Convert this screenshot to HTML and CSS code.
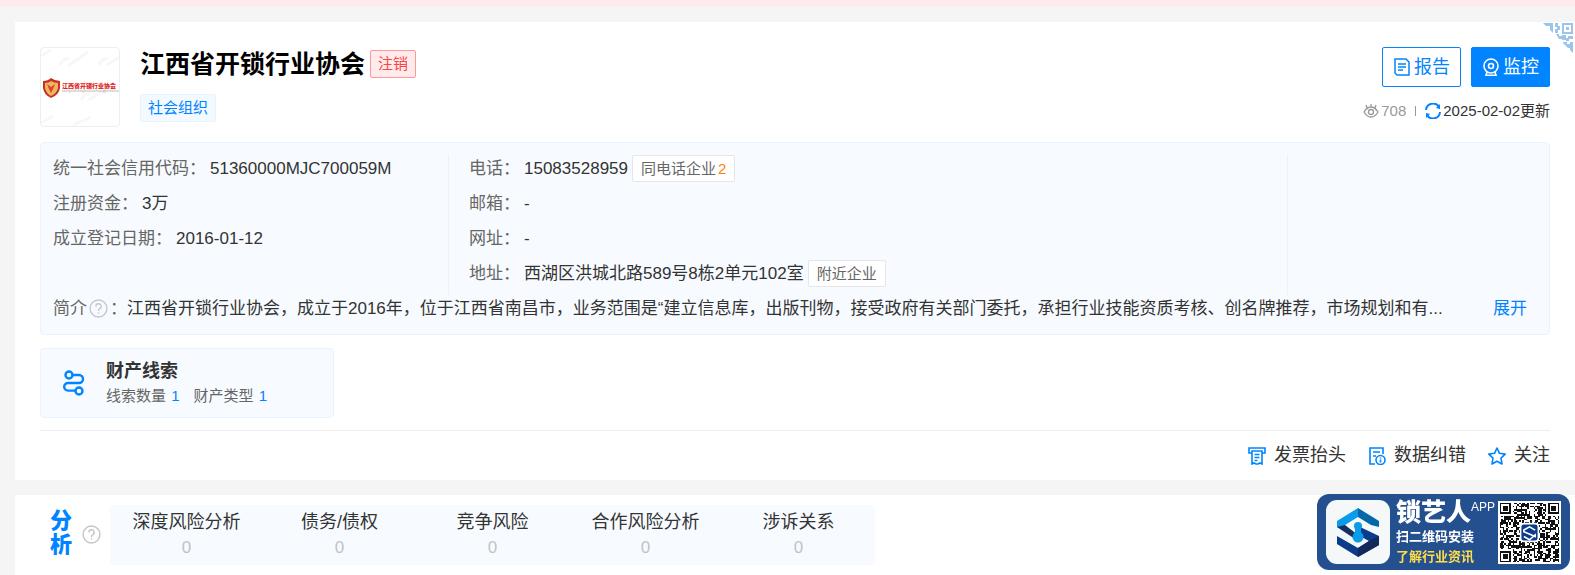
FILE: index.html
```html
<!DOCTYPE html>
<html lang="zh-CN">
<head>
    <meta charset="UTF-8">
    <meta name="viewport" content="width=device-width, initial-scale=1.0">
    <title>江西省开锁行业协会</title>
    <link rel="stylesheet" href="styles.css">
</head>
<body>
    <div class="notice"></div>

    <main class="page">
        <section class="card company">
            <svg class="corner" viewBox="0 0 30 30" aria-hidden="true">
                <g fill="#9cc5ec">
                    <path d="M0 0h10v10L7 7V3H3z"/>
                    <path d="M12 0h3v3h2v4h-2v3h-3V6h2V4h-2zM19 0h11v11H19zM13 11h3v2h3v-1h4v3h2v-2h5v3h-4v2h-3v-1h-3l-2-1h-2z"/>
                    <path d="M20 19h4v2h3v-2h3v11l-3-3v-2h-2l-5-5z"/>
                </g>
                <path d="M21 2h7v7h-7z" fill="#fff"/>
                <path d="M23 4h3v3h-3z" fill="#9cc5ec"/>
            </svg>

            <header class="company-head">
                <div class="logo">
                    <svg viewBox="0 0 78 78" aria-hidden="true">
                        <g fill="none" stroke="#f7f7f7" stroke-width="3">
                            <path d="M19 17q3-7 9-6M27 18l20-14M58 17q3-7 9-6M66 17l12-8M40 52q3-7 9-6M48 52l20-13M0 75l12-7M32 77l18-8M0 8l10-6"/>
                        </g>
                        <path d="M2 33q5 0 8-3 4 3 9 3v7q-1 7-9 10-7-3-8-10z" fill="#c9302c"/>
                        <path d="M4 35q4 0 6-2 3 2 7 2v5q-1 5-7 8-5-3-6-8z" fill="#efb65c"/>
                        <path d="M6 36l4 3 4-3-2 5-2 4-2-4z" fill="#d6452f"/>
                        <text x="21" y="40" class="logo-name">江西省开锁行业协会</text>
                        <text x="21" y="44" class="logo-latin">jiangxishengkaisuohangyexiehui</text>
                    </svg>
                </div>
                <div class="names">
                    <div class="title-row">
                        <h1>江西省开锁行业协会</h1>
                        <span class="tag tag-red">注销</span>
                    </div>
                    <span class="tag tag-blue">社会组织</span>
                </div>
                <div class="head-side">
                    <div class="buttons">
                        <button class="btn" type="button">
                            <svg viewBox="0 0 18 18" fill="none" stroke="currentColor" stroke-width="1.5" aria-hidden="true">
                                <path d="M2 1h11l3 3v13H4l-2-2zM5 6h8M5 9h8M5 12h5"/>
                            </svg>报告
                        </button>
                        <button class="btn btn-main" type="button">
                            <svg viewBox="0 0 18 18" fill="none" stroke="currentColor" stroke-width="1.6" aria-hidden="true">
                                <circle cx="9" cy="8" r="7"/><circle cx="9" cy="8" r="2.5"/>
                                <path d="M5 14l-1 3.2h10L13 14"/>
                            </svg>监控
                        </button>
                    </div>
                    <div class="meta">
                        <svg viewBox="0 0 16 16" fill="none" stroke="#999" stroke-width="1.3" aria-hidden="true">
                            <path d="M1 9q3-5 7-5t7 5q-3 5-7 5T1 9zM8 4V1M4 5L3 2M12 5l1-3"/>
                            <circle cx="8" cy="9" r="2.5"/>
                        </svg>
                        <span class="views">708</span>
                        <span class="bar"></span>
                        <svg viewBox="0 0 16 16" fill="none" stroke="#0084ff" stroke-width="2" aria-hidden="true">
                            <path d="M1 7a7 7 0 0 1 13-3M15 9a7 7 0 0 1-13 3"/>
                            <path d="M15 1v5l-4-1zM1 15v-5l4 1z" fill="#0084ff" stroke="none"/>
                        </svg>
                        <span>2025-02-02更新</span>
                    </div>
                </div>
            </header>

            <div class="info">
                <div class="info-cols">
                    <dl class="info-col">
                        <div class="row"><dt>统一社会信用代码：</dt><dd>51360000MJC700059M</dd></div>
                        <div class="row"><dt>注册资金：</dt><dd>3万</dd></div>
                        <div class="row"><dt>成立登记日期：</dt><dd>2016-01-12</dd></div>
                    </dl>
                    <dl class="info-col">
                        <div class="row"><dt>电话：</dt><dd>15083528959</dd><dd><a class="chip" href="#">同电话企业<b>2</b></a></dd></div>
                        <div class="row"><dt>邮箱：</dt><dd>-</dd></div>
                        <div class="row"><dt>网址：</dt><dd>-</dd></div>
                        <div class="row"><dt>地址：</dt><dd>西湖区洪城北路589号8栋2单元102室</dd><dd><a class="chip" href="#">附近企业</a></dd></div>
                    </dl>
                    <div class="info-col"></div>
                </div>
                <div class="summary">
                    <span class="label">简介</span>
                    <svg class="help" viewBox="0 0 18 18" fill="none" stroke="#c4c8ce" stroke-width="1.3" aria-hidden="true">
                        <circle cx="9" cy="9" r="8"/><path d="M6.5 7a2.5 2.5 0 1 1 3.5 2.3q-1 .5-1 2M9 12.5v1.3"/>
                    </svg>
                    <span class="label">：</span>
                    <p>江西省开锁行业协会，成立于2016年，位于江西省南昌市，业务范围是“建立信息库，出版刊物，接受政府有关部门委托，承担行业技能资质考核、创名牌推荐，市场规划和有...</p>
                    <a href="#">展开</a>
                </div>
            </div>

            <a class="clue" href="#">
                <svg viewBox="0 0 24 26" fill="none" stroke="#0084ff" stroke-width="2.400" aria-hidden="true">
                    <circle cx="7" cy="5" r="3.5"/><circle cx="17" cy="21" r="3.5"/>
                    <path d="M10.500 5H17a4 4 0 0 1 0 8H6a3.800 3.800 0 0 0 0 7.600h7.500"/>
                </svg>
                <span class="clue-text">
                    <strong>财产线索</strong>
                    <span class="clue-counts"><span>线索数量 <i>1</i></span><span>财产类型 <i>1</i></span></span>
                </span>
            </a>

            <div class="actions">
                <a href="#">
                    <svg viewBox="0 0 18 18" fill="none" stroke="#0084ff" stroke-width="1.6" aria-hidden="true">
                        <path d="M4 6H1V1h16v5h-3M4 4h10v13l-2-1-2 1H8l-2-1-2 1zM6.500 7.500h5M6.500 10.500h5M6.500 13.500h3"/>
                    </svg>发票抬头
                </a>
                <a href="#">
                    <svg viewBox="0 0 18 18" fill="none" stroke="#0084ff" stroke-width="1.6" aria-hidden="true">
                        <path d="M7 17H2V1h13v6M5 5h7M5 9h3M12.500 10.500v1M12.500 12.500v3"/><circle cx="12.500" cy="13" r="4.500"/>
                    </svg>数据纠错
                </a>
                <a href="#">
                    <svg viewBox="0 0 18 18" fill="none" stroke="#0084ff" stroke-width="1.6" stroke-linejoin="round" aria-hidden="true">
                        <path d="M9 1l2.500 5.300 5.700.8-4.200 4 1 5.900-5-2.800L4 17l1-5.900-4.200-4 5.700-.8z"/>
                    </svg>关注
                </a>
            </div>
        </section>

        <section class="card analysis">
            <h2>分析</h2>
            <svg class="help" viewBox="0 0 18 18" fill="none" stroke="#c4c4c4" stroke-width="1.3" aria-hidden="true">
                <circle cx="9" cy="9" r="8"/><path d="M6.500 7a2.500 2.500 0 1 1 3.500 2.300q-1 .5-1 2M9 12.500v1.300"/>
            </svg>
            <nav class="tabs">
                <a href="#">深度风险分析<span>0</span></a>
                <a href="#">债务/债权<span>0</span></a>
                <a href="#">竞争风险<span>0</span></a>
                <a href="#">合作风险分析<span>0</span></a>
                <a href="#">涉诉关系<span>0</span></a>
            </nav>
        </section>
    </main>

    <aside class="app-banner">
        <svg class="app-icon" viewBox="0 0 64 64" aria-hidden="true">
            <rect width="64" height="64" rx="11" fill="#f5f8f9"/>
            <path d="M11 21L32 8v9L19 25v5l-8-3z" fill="#0a9ce8"/>
            <path d="M32 8l21 13v6l-8-2-13-8z" fill="#0468a8"/>
            <path d="M11 27l8-2 13 10v6z" fill="#15315f"/>
            <path d="M32 26l21 10v9L32 57 11 44v-8l21 12 11-7-11-6z" fill="#0b3c8c"/>
            <path d="M43 41l10-5v9L32 57v-9z" fill="#15285c"/>
            <circle cx="32" cy="26" r="4" fill="#0a9ce8"/><circle cx="32" cy="37" r="5.500" fill="#0a9ce8"/>
            <path d="M29 26h6v10h-6z" fill="#0a9ce8"/>
        </svg>
        <div class="app-text">
            <div class="app-name">锁艺人<sup>APP</sup></div>
            <div>扫二维码安装</div>
            <div class="app-news">了解行业资讯</div>
        </div>
        <svg class="qr" viewBox="0 0 39 39" shape-rendering="crispEdges" aria-hidden="true">
            <rect width="39" height="39" fill="#fff"/>
            <path id="qrDots" fill="#111"/>
            <g id="finder">
                <path d="M1 1h7v7H1z" fill="#111"/><path d="M2 2h5v5H2z" fill="#fff"/><path d="M3 3h3v3H3z" fill="#111"/>
            </g>
            <use href="#finder" x="30"/>
            <use href="#finder" y="30"/>
            <rect x="14" y="14" width="11" height="11" rx="2" fill="#0b3c8c" stroke="#fff" shape-rendering="auto"/>
            <path d="M23 18l-3.500-2-3.500 2v1l7 3v-1l-3.500 3-3.500-2" fill="none" stroke="#fff" shape-rendering="auto"/>
        </svg>
    </aside>

    <script>
        // fill the code area, leaving the three finder corners free
        let seed = 11;
        let d = '';
        for (let y = 1; y < 38; y++) {
            for (let x = 1; x < 38; x++) {
                seed = (seed * 1103515245 + 12345) % 2147483648;
                const corner = (x < 9 && y < 9) || (x > 29 && y < 9) || (x < 9 && y > 29);
                if (!corner && seed / 2147483648 > 0.48) {
                    d += `M${x} ${y}h1v1h-1z`;
                }
            }
        }
        document.getElementById('qrDots').setAttribute('d', d);
    </script>
</body>
</html>
```
FILE: styles.css
```css
* {
    box-sizing: border-box;
}
body {
    margin: 0;
    min-height: 100vh;
    display: flex;
    flex-direction: column;
    background-color: #f5f5f5;
    color: #333;
    font-family: "Liberation Sans", "Noto Sans CJK SC", sans-serif;
    font-size: 17px;
}
h1, h2, p, dl, dd {
    margin: 0;
}
a {
    color: inherit;
    text-decoration: none;
}
svg {
    display: block;
    flex: none;
}
.notice {
    height: 7px;
    background-color: #ffebeb;
}
.page {
    flex: 1;
    display: flex;
    flex-direction: column;
    gap: 15px;
    padding: 15px 0 0 15px;
}
.card {
    background-color: #fff;
    padding: 25px;
}
.company {
    position: relative;
    padding-bottom: 0;
}
.corner {
    position: absolute;
    top: 1px;
    right: 2px;
    width: 30px;
    height: 30px;
}

/* company header */
.company-head {
    display: flex;
    gap: 20px;
}
.logo {
    width: 80px;
    height: 80px;
    border: 1px solid #eee;
    border-radius: 4px;
}
.logo-name {
    fill: #e02020;
    font-size: 6px;
    font-weight: 900;
}
.logo-latin {
    fill: #aaa;
    font-size: 4px;
}
.names {
    flex: 1;
}
.title-row {
    display: flex;
    align-items: center;
    gap: 5px;
    height: 34px;
    margin-bottom: 13px;
}
h1 {
    color: #000;
    font-size: 25px;
    line-height: 34px;
}
.tag {
    display: inline-block;
    padding: 0 7px;
    border: 1px solid;
    border-radius: 2px;
    font-size: 15px;
    line-height: 26px;
}
.tag-red {
    color: #ff4444;
    background-color: #ffebeb;
    border-color: #ff9999;
}
.tag-blue {
    color: #0084ff;
    background-color: #f2f9ff;
    border-color: #e7f4ff;
}
.buttons {
    display: flex;
    justify-content: flex-end;
    gap: 10px;
    margin-bottom: 12px;
}
.btn {
    display: flex;
    align-items: center;
    justify-content: center;
    gap: 3px;
    width: 79px;
    height: 40px;
    padding: 0;
    border: 1px solid #0084ff;
    border-radius: 2px;
    background-color: #fff;
    color: #0084ff;
    font-family: inherit;
    font-size: 18px;
    line-height: 26px;
    cursor: pointer;
}
.btn svg {
    width: 18px;
    height: 18px;
}
.btn-main {
    background-color: #0084ff;
    color: #fff;
}
.meta {
    display: flex;
    align-items: center;
    justify-content: flex-end;
    gap: 2px;
    font-size: 15px;
    line-height: 24px;
}
.meta svg {
    width: 16px;
    height: 16px;
}
.views {
    color: #999;
}
.bar {
    width: 1px;
    height: 10px;
    margin: 0 7px;
    background-color: #999;
}

/* registration info */
.info {
    margin-top: 15px;
    padding: 12px;
    border: 1px solid #e7f4ff;
    border-radius: 4px;
    background-color: #f7fbff;
    line-height: 28px;
}
.info-cols {
    display: grid;
    grid-template-columns: 395fr 839fr 262fr;
    margin-right: -12px;
}
.info-col {
    display: flex;
    flex-direction: column;
    gap: 8px;
    padding: 0 0 8px 20px;
    border-left: 1px solid #ebf1f7;
}
.info-col:first-child {
    padding-left: 0;
    border-left: none;
}
.row {
    display: flex;
    gap: 4px;
    height: 27px;
}
.row dt, .label {
    color: #666;
}
.chip {
    display: block;
    padding: 0 8px;
    border: 1px solid #e3e6ea;
    border-radius: 2px;
    background-color: #fff;
    color: #666;
    font-size: 15px;
    line-height: 25px;
}
.chip b {
    margin-left: 2px;
    color: #ff8400;
    font-weight: normal;
}
.help {
    width: 19px;
    height: 19px;
}
.summary {
    display: flex;
    align-items: center;
    height: 27px;
    padding-right: 10px;
}
.summary .help {
    margin: 0 2px;
}
.summary p {
    flex: 1;
    min-width: 0;
    overflow: hidden;
    white-space: nowrap;
    text-overflow: ellipsis;
}
.summary a {
    flex: none;
    margin-left: 6px;
    color: #0084ff;
}

/* property clues */
.clue {
    display: flex;
    align-items: center;
    gap: 20px;
    width: 294px;
    height: 70px;
    margin-top: 13px;
    padding: 0 21px;
    border: 1px solid #e7f4ff;
    border-radius: 4px;
    background-color: #f7fbff;
}
.clue svg {
    width: 24px;
    height: 26px;
}
.clue strong {
    display: block;
    font-size: 18px;
    line-height: 26px;
}
.clue-counts {
    display: flex;
    gap: 14px;
    color: #666;
    font-size: 15px;
    line-height: 24px;
}
.clue i {
    margin-left: 1px;
    color: #0084ff;
    font-style: normal;
}

.actions {
    display: flex;
    justify-content: flex-end;
    gap: 22px;
    margin-top: 12px;
    border-top: 1px solid #eee;
    font-size: 18px;
    line-height: 49px;
}
.actions a {
    display: flex;
    align-items: center;
    gap: 8px;
}
.actions svg {
    width: 18px;
    height: 18px;
}

/* analysis */
.analysis {
    flex: 1;
    display: flex;
    align-items: flex-start;
    padding: 10px 25px;
}
.analysis h2 {
    width: 22px;
    margin: 4px 10px 0 10px;
    color: #0084ff;
    font-size: 22px;
    font-weight: 900;
    line-height: 24px;
}
.analysis .help {
    margin: 20px 9px 0 0;
}
.tabs {
    display: flex;
    border-radius: 4px;
    background-color: #f7fbff;
}
.tabs a {
    width: 153px;
    height: 60px;
    padding-top: 4px;
    font-size: 18px;
    line-height: 26px;
    text-align: center;
}
.tabs span {
    display: block;
    color: #bfc3c9;
    font-size: 17px;
}

/* app banner */
.app-banner {
    position: fixed;
    right: 5px;
    bottom: 5px;
    display: flex;
    align-items: center;
    height: 76px;
    padding: 0 9px;
    border-radius: 12px;
    background-color: #24508f;
    color: #fff;
    font-size: 13px;
    font-weight: bold;
    line-height: 20px;
}
.app-icon {
    width: 64px;
    height: 64px;
}
.app-text {
    width: 108px;
    padding-left: 6px;
    white-space: nowrap;
}
.app-name {
    display: flex;
    font-size: 25px;
    font-weight: 900;
    line-height: 30px;
}
.app-name sup {
    font-size: 12px;
    font-weight: normal;
    line-height: 20px;
}
.app-news {
    color: #ffdc4a;
}
.qr {
    width: 63px;
    height: 63px;
}
```
